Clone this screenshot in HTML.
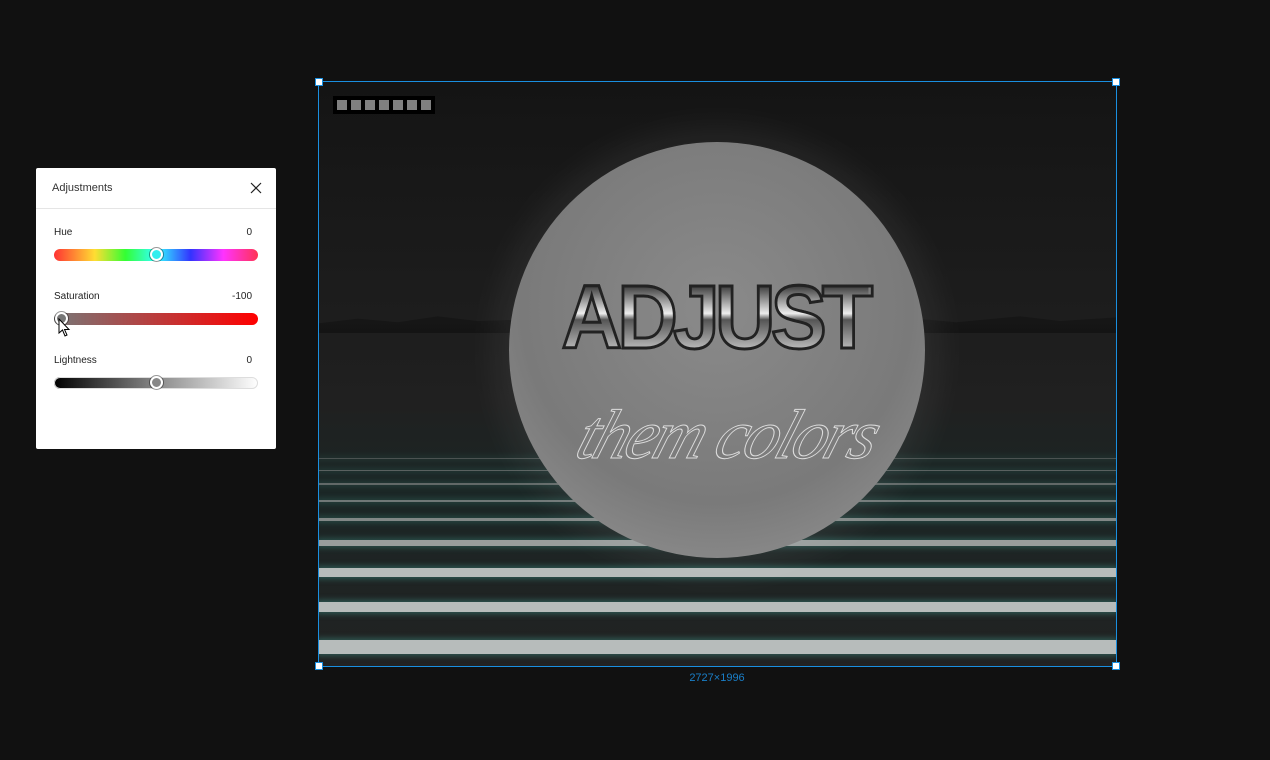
<!DOCTYPE html>
<html><head><style>
body{margin:0;width:1270px;height:760px;background:#111111;position:relative;overflow:hidden;font-family:"Liberation Sans",sans-serif}
.panel{position:absolute;left:36px;top:168px;width:240px;height:281px;background:#fff;border-radius:2px}
.hd{height:40px;border-bottom:1px solid #e5e5e5;font-size:11px;color:#333;line-height:41px;padding-left:16px}
.lbl{position:absolute;left:18px;font-size:10px;color:#222}
.val{position:absolute;right:24px;font-size:10px;color:#222}
.sl{position:absolute;left:18px;width:204px;height:12px;border-radius:6px}
.kn{position:absolute;width:9px;height:9px;border-radius:50%;border:2px solid #fff;box-shadow:0 0 0 1px rgba(0,0,0,.4)}
.img{position:absolute;left:318px;top:81px;width:798px;height:585px;overflow:hidden;background:linear-gradient(#141414,#1c1c1c 35%,#202020 55%,#1b2625 70%,#222)}
.st{position:absolute;left:0;width:100%;background:#b7bcbb;box-shadow:0 0 6px 2px rgba(60,140,130,.5)}
.h{position:absolute;width:6px;height:6px;background:#fff;border:1px solid #1a8fe0}
</style></head><body>
<div class="panel">
<div class="hd">Adjustments</div>
<svg style="position:absolute;right:14px;top:14px" width="12" height="12"><path d="M1 1L11 11M11 1L1 11" stroke="#222" stroke-width="1.2"/></svg>
<div class="lbl" style="top:59px">Hue</div><div class="val" style="top:59px">0</div>
<div class="sl" style="top:81px;background:linear-gradient(90deg,#f33,#fd3 20%,#3f3 35%,#3ff 50%,#33f 67%,#f3f 83%,#f35)"></div>
<div class="kn" style="left:114px;top:80px;background:#3ee"></div>
<div class="lbl" style="top:123px">Saturation</div><div class="val" style="top:123px">-100</div>
<div class="sl" style="top:145px;background:linear-gradient(90deg,#777,#f00)"></div>
<div class="kn" style="left:19px;top:144px;background:#777"></div>
<div class="lbl" style="top:187px">Lightness</div><div class="val" style="top:187px">0</div>
<div class="sl" style="top:209px;background:linear-gradient(90deg,#000,#888 50%,#fff);box-shadow:inset 0 0 0 1px #ddd"></div>
<div class="kn" style="left:114px;top:208px;background:#888"></div>
<svg style="position:absolute;left:22px;top:150px" width="14" height="20"><path d="M1 1L1 15L4.5 12L7 18L9 17L6.5 11.5L11 11.5Z" fill="#fff" stroke="#000"/></svg>
</div>
<div class="img">
<div style="position:absolute;left:0;top:228px;width:100%;height:24px;background:linear-gradient(#181818,#141414);clip-path:polygon(0 60%,5% 40%,10% 55%,15% 30%,20% 50%,25% 45%,30% 65%,70% 65%,75% 40%,80% 55%,88% 30%,93% 50%,100% 35%,100% 100%,0 100%)"></div>
<div class="st" style="top:377px;height:1px;opacity:.3"></div>
<div class="st" style="top:389px;height:1px;opacity:.4"></div>
<div class="st" style="top:402px;height:2px;opacity:.45"></div>
<div class="st" style="top:419px;height:2px;opacity:.55"></div>
<div class="st" style="top:437px;height:3px;opacity:.65"></div>
<div class="st" style="top:459px;height:6px;opacity:.8"></div>
<div class="st" style="top:487px;height:9px"></div>
<div class="st" style="top:521px;height:10px"></div>
<div class="st" style="top:559px;height:14px"></div>
<div style="position:absolute;left:191px;top:61px;width:416px;height:416px;border-radius:50%;background:radial-gradient(circle at 50% 40%,#8a8a8a,#7a7a7a 60%,#999 100%);box-shadow:0 0 40px 10px rgba(255,255,255,.08)"></div>
<div style="position:absolute;left:232px;top:192px;width:330px;height:90px;font:900 90px/90px 'Liberation Sans';text-align:center;letter-spacing:-5px;transform:scaleX(0.93);background:linear-gradient(#222 10%,#eee 45%,#555 52%,#ccc 90%);-webkit-background-clip:text;background-clip:text;color:transparent;-webkit-text-stroke:3px #222">ADJUST</div>
<div style="position:absolute;left:262px;top:305px;font:italic 300 70px/100px 'Liberation Serif';color:#7c7c7c;-webkit-text-stroke:1px #ddd;transform:skewX(-18deg);letter-spacing:-3px">them colors</div>
<div style="position:absolute;left:15px;top:15px;width:102px;height:18px;background:#000"></div>
<div style="position:absolute;left:19px;top:19px;display:flex;gap:4px">
<i style="width:10px;height:10px;background:#808080"></i><i style="width:10px;height:10px;background:#808080"></i><i style="width:10px;height:10px;background:#808080"></i><i style="width:10px;height:10px;background:#808080"></i><i style="width:10px;height:10px;background:#808080"></i><i style="width:10px;height:10px;background:#808080"></i><i style="width:10px;height:10px;background:#808080"></i></div>
</div>
<div style="position:absolute;left:318px;top:81px;width:797px;height:584px;border:1px solid #1a8fe0"></div>
<div class="h" style="left:315px;top:78px"></div><div class="h" style="left:1112px;top:78px"></div>
<div class="h" style="left:315px;top:662px"></div><div class="h" style="left:1112px;top:662px"></div>
<div style="position:absolute;left:0;width:1434px;top:672px;text-align:center;font-size:11px;color:#1a7fc8">2727×1996</div>
</body></html>
